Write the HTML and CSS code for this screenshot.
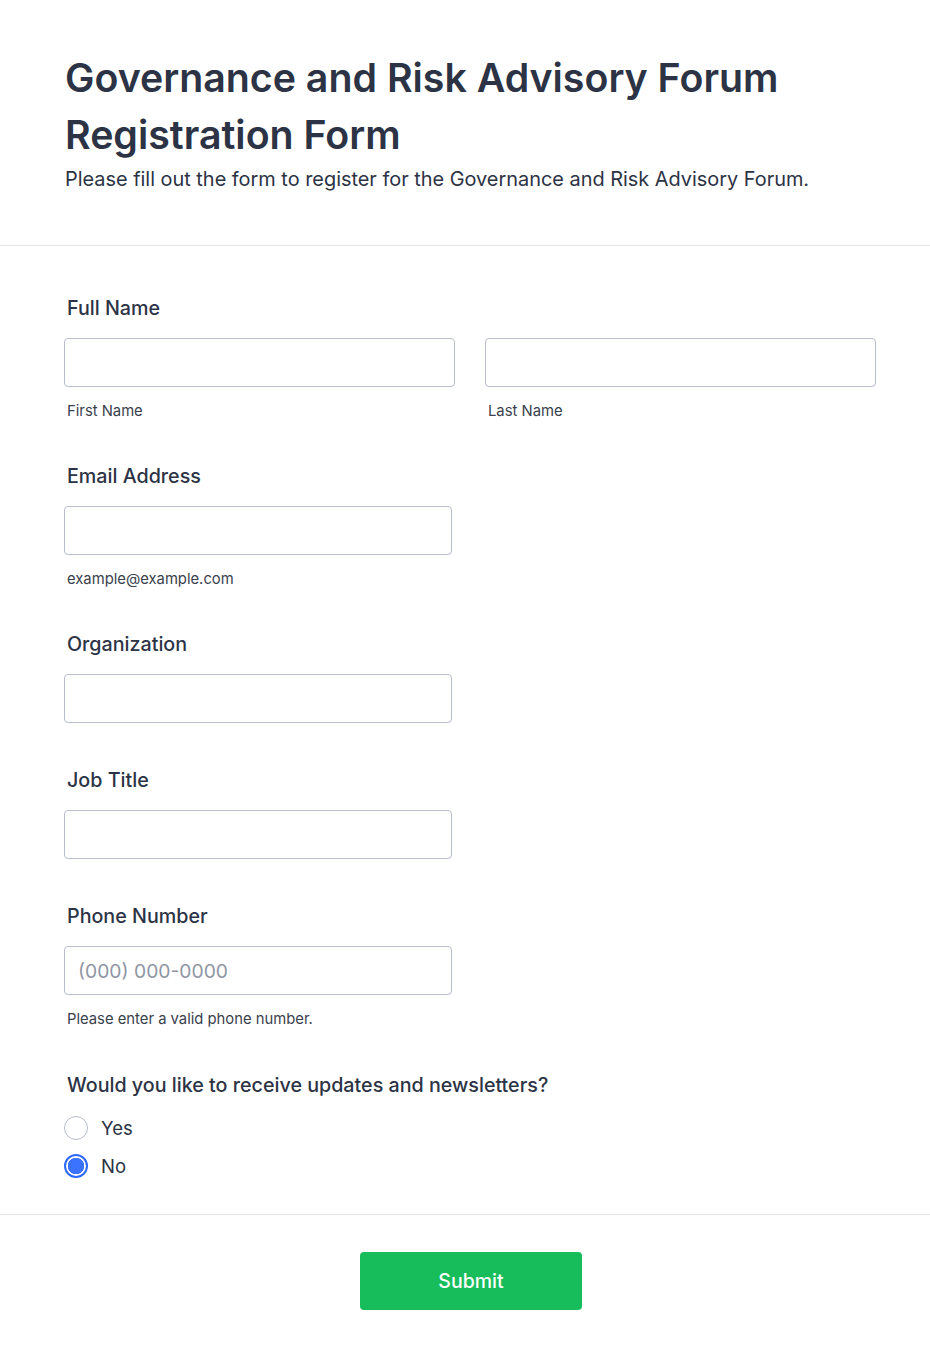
FILE: index.html
```html
<!DOCTYPE html>
<html lang="en">
<head>
<meta charset="utf-8">
<title>Governance and Risk Advisory Forum Registration Form</title>
<link rel="stylesheet" href="styles.css">
</head>
<body>
<header class="header">
  <h1 class="title">Governance and Risk Advisory Forum Registration Form</h1>
  <p class="subtitle">Please fill out the form to register for the Governance and Risk Advisory Forum.</p>
</header>
<form class="form">
  <div class="fields">
    <div class="field">
      <label class="label">Full Name</label>
      <div class="name-row">
        <div class="name-col">
          <input class="input" type="text">
          <span class="sublabel">First Name</span>
        </div>
        <div class="name-col">
          <input class="input" type="text">
          <span class="sublabel">Last Name</span>
        </div>
      </div>
    </div>
    <div class="field">
      <label class="label">Email Address</label>
      <input class="input input-single" type="email">
      <span class="sublabel">example@example.com</span>
    </div>
    <div class="field">
      <label class="label">Organization</label>
      <input class="input input-single" type="text">
    </div>
    <div class="field">
      <label class="label">Job Title</label>
      <input class="input input-single" type="text">
    </div>
    <div class="field field-tail">
      <label class="label">Phone Number</label>
      <input class="input input-single" type="tel" placeholder="(000) 000-0000">
      <span class="sublabel">Please enter a valid phone number.</span>
    </div>
    <div class="field">
      <label class="label">Would you like to receive updates and newsletters?</label>
      <div class="radios">
        <label class="radio-row"><input class="radio" type="radio" name="news"><span>Yes</span></label>
        <label class="radio-row"><input class="radio" type="radio" name="news" checked><span>No</span></label>
      </div>
    </div>
  </div>
  <div class="actions">
    <button class="submit" type="button">Submit</button>
  </div>
</form>
</body>
</html>
```
FILE: styles.css
```css
* { box-sizing: border-box; }
html, body { margin: 0; padding: 0; background: #ffffff; }
body {
  font-family: Inter, "Noto Sans", sans-serif;
  color: #2c3345;
}
.header {
  padding: 49px 55px 51px 65px;
  border-bottom: 1px solid #e3e5ea;
}
.title {
  margin: 0;
  font-size: 39.3px;
  line-height: 57px;
  font-weight: 600;
  color: #2c3345;
}
.subtitle {
  margin: 1px 0 0;
  font-size: 19.9px;
  line-height: 30px;
  font-weight: 400;
  color: #2c3345;
}
.form { margin: 0; }
.fields {
  padding: 48px 55px 34px 64px;
  display: flex;
  flex-direction: column;
  gap: 42px;
}
.field {
  display: flex;
  flex-direction: column;
  align-items: flex-start;
}
.field > .input:last-child { margin-bottom: 1px; }
.field-tail { padding-bottom: 1px; }
.label {
  font-size: 19.7px;
  line-height: 28px;
  font-weight: 500;
  margin: 0 0 16px 3px;
  color: #2c3345;
}
.name-row {
  display: grid;
  grid-template-columns: 391px 391px;
  column-gap: 30px;
}
.name-col {
  display: flex;
  flex-direction: column;
}
.input {
  width: 391px;
  height: 49px;
  border: 1px solid #b8bdc9;
  border-radius: 4px;
  padding: 0 13px;
  font-family: Inter, "Noto Sans", sans-serif;
  font-size: 19.3px;
  color: #2c3345;
  background: #fff;
  outline: none;
}
.input-single { width: 388px; }
.input::placeholder { color: #8f96a3; }
.sublabel {
  margin: 15px 0 0 3px;
  font-size: 14.8px;
  line-height: 18px;
  color: #39414d;
}
.radios {
  display: flex;
  flex-direction: column;
  gap: 10px;
  margin-top: -1px;
}
.radio-row {
  display: flex;
  align-items: center;
  gap: 13px;
  height: 28px;
  font-size: 18.5px;
  color: #2c3345;
}
.radio {
  appearance: none;
  -webkit-appearance: none;
  margin: 0;
  width: 24px;
  height: 24px;
  border-radius: 50%;
  border: 1px solid #b8bdc9;
  background: #fff;
}
.radio:checked {
  border: 2px solid #2e69ff;
  background: radial-gradient(circle, #3b73ff 0 8px, #ffffff 8.5px);
}
.actions {
  border-top: 1px solid #e3e5ea;
  padding: 37px 0 50px 12px;
  display: flex;
  justify-content: center;
}
.submit {
  width: 222px;
  height: 58px;
  border: none;
  border-radius: 4px;
  background: #18bd5b;
  color: #ffffff;
  font-family: Inter, "Noto Sans", sans-serif;
  font-size: 19.5px;
  font-weight: 500;
  cursor: pointer;
}
```
